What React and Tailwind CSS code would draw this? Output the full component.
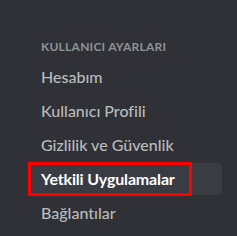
import React from 'react';

const items = ['Hesabım', 'Kullanıcı Profili', 'Gizlilik ve Güvenlik', 'Yetkili Uygulamalar', 'Bağlantılar'];

const App = () => {
    return (
        <div className="w-[237px] h-[236px] bg-[#2f3136] overflow-hidden pt-[33px] pl-[31px] pr-[15px] [font-variant-ligatures:none]" style={{ fontFamily: 'Lato, "Liberation Sans", sans-serif' }}>
            {/* Section header */}
            <div className="px-2.5 py-1.5 text-xs leading-4 font-bold uppercase text-[#8e9297] tracking-[0.02em]">
                Kullanıcı Ayarları
            </div>

            {/* Items */}
            {items.map(item => {
                const selected = item === 'Yetkili Uygulamalar';
                return (
                    <div
                        key={item}
                        className={
                            selected
                                ? 'relative mb-0.5 px-2.5 py-1.5 rounded text-base leading-5 font-bold text-white bg-[#393c43] tracking-[-0.01em]'
                                : 'relative mb-0.5 px-2.5 py-1.5 rounded text-base leading-5 font-medium text-[#b9bbbe]'
                        }
                    >
                        {item}
                        {selected && (
                            <div className="absolute left-[-3px] top-[-1px] w-[164px] h-[34px] border-[3px] border-[#ff0000]" />
                        )}
                    </div>
                );
            })}
        </div>
    );
};

export default App;
